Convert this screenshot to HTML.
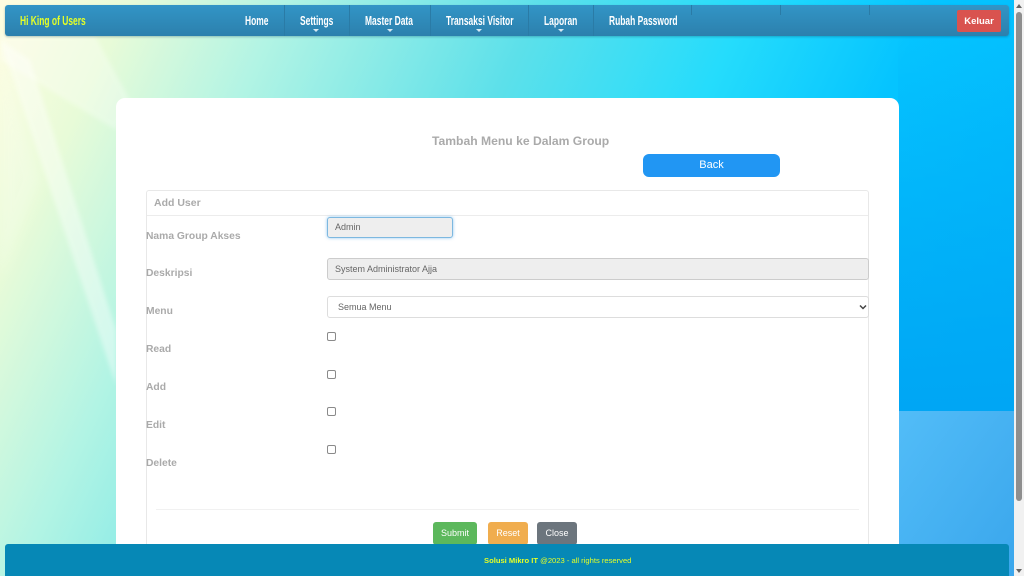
<!DOCTYPE html>
<html><head><meta charset="utf-8">
<style>
html,body{margin:0;padding:0;width:1024px;height:576px;overflow:hidden}
body{position:relative;font-family:"Liberation Sans",sans-serif}
.a{position:absolute}
.bg{left:0;top:0;width:1024px;height:576px;overflow:hidden;background:linear-gradient(115deg,#fffde0 0%,#e8fbd8 10%,#b2f4e4 22%,#5ce0ea 42%,#25dcfc 58%,#05c4ff 72%,#00b4fb 100%)}
.n{position:absolute;top:14px;color:#fff;font-weight:bold;font-size:13px;line-height:14px;white-space:nowrap;transform-origin:0 50%;transform:scaleX(.65)}
.sep{position:absolute;top:5px;width:1px;height:31px;background:#2a7ba6}
.car{position:absolute;top:29px;width:0;height:0;border-left:3.5px solid transparent;border-right:3.5px solid transparent;border-top:3px solid #d5e8f2}
.l{position:absolute;left:146px;font-weight:bold;font-size:10.3px;line-height:13px;color:#aaa}
.cb{position:absolute;left:327px;width:7px;height:7px;border:1px solid #8a8a8a;border-radius:2px;background:#fff}
.btn{position:absolute;top:522px;height:23px;border-radius:3px;color:#fff;font-size:9px;line-height:23px;text-align:center}
</style></head><body>
<div class="a bg">
<svg width="1024" height="576" style="position:absolute;left:0;top:0">
<defs>
<filter id="b" x="-20%" y="-20%" width="140%" height="140%"><feGaussianBlur stdDeviation="2"/></filter>
<filter id="b2" x="-30%" y="-30%" width="160%" height="160%"><feGaussianBlur stdDeviation="6"/></filter>
<linearGradient id="r" x1="0" y1="0" x2="0" y2="1"><stop offset="0" stop-color="#00a6f4" stop-opacity="0"/><stop offset="1" stop-color="#00a6f4"/></linearGradient>
<linearGradient id="q" x1="0" y1="0" x2="1" y2="1"><stop offset="0" stop-color="#52bdf8"/><stop offset="1" stop-color="#3aa6ec"/></linearGradient>
</defs>
<polygon points="0,36 95,36 130,100 116,130 0,60" fill="#fff" opacity=".3" filter="url(#b)"/>
<polygon points="0,40 30,60 116,330 116,385" fill="#fff" opacity=".4" filter="url(#b)"/>
<polygon points="0,40 0,280 40,180" fill="#fff" opacity=".2" filter="url(#b2)"/>
<rect x="898" y="36" width="116" height="375" fill="url(#r)"/>
<rect x="898" y="411" width="116" height="165" fill="url(#q)"/>
</svg>
</div>

<div class="a" style="left:5px;top:5px;width:1004px;height:31px;border-radius:3px;background:linear-gradient(#3295c6,#2c80ad);box-shadow:0 1px 2px rgba(0,60,90,.3)"></div>
<div class="n" style="left:20px;color:#e6ff26">Hi King of Users</div>
<div class="n" style="left:245px">Home</div>
<div class="sep" style="left:284px"></div>
<div class="n" style="left:300px">Settings</div><div class="car" style="left:313px"></div>
<div class="sep" style="left:349px"></div>
<div class="n" style="left:365px">Master Data</div><div class="car" style="left:387px"></div>
<div class="sep" style="left:430px"></div>
<div class="n" style="left:446px">Transaksi Visitor</div><div class="car" style="left:476px"></div>
<div class="sep" style="left:528px"></div>
<div class="n" style="left:544px">Laporan</div><div class="car" style="left:558px"></div>
<div class="sep" style="left:593px"></div>
<div class="n" style="left:609px">Rubah Password</div>
<div class="sep" style="left:691px;height:10px"></div>
<div class="sep" style="left:780px;height:10px"></div>
<div class="sep" style="left:869px;height:10px"></div>
<div class="a" style="left:957px;top:10px;width:44px;height:22px;border-radius:2px;background:#d9534f;color:#fff;font-weight:bold;font-size:9.5px;line-height:23px;text-align:center">Keluar</div>

<div class="a" style="left:116px;top:98px;width:783px;height:470px;background:#fff;border-radius:9px 9px 0 0"></div>
<div class="a" style="left:432px;top:134px;color:#aaa;font-weight:bold;font-size:12.15px;line-height:15px;white-space:nowrap">Tambah Menu ke Dalam Group</div>
<div class="a" style="left:643px;top:154px;width:137px;height:23px;background:#2196f3;border-radius:6px;color:#fff;font-size:11px;line-height:22px;text-align:center">Back</div>

<div class="a" style="left:146px;top:190px;width:723px;height:370px;border:1px solid #e8e8e8;border-radius:3px;box-sizing:border-box"></div>
<div class="a" style="left:147px;top:215px;width:721px;height:1px;background:#ececec"></div>
<div class="a" style="left:154px;top:196px;color:#aaa;font-weight:bold;font-size:10.5px;line-height:14px">Add User</div>

<div class="l" style="top:230px">Nama Group Akses</div>
<div class="l" style="top:267px">Deskripsi</div>
<div class="l" style="top:305px">Menu</div>
<div class="l" style="top:343px">Read</div>
<div class="l" style="top:381px">Add</div>
<div class="l" style="top:419px">Edit</div>
<div class="l" style="top:457px">Delete</div>

<div class="a" style="left:327px;top:217px;width:126px;height:21px;box-sizing:border-box;border:1px solid #7db8e0;border-radius:3px;background:#eee;box-shadow:0 0 3px rgba(102,175,233,.7);color:#666;font-size:9px;line-height:19px;padding-left:7px">Admin</div>
<div class="a" style="left:327px;top:258px;width:542px;height:22px;box-sizing:border-box;border:1px solid #ccc;border-radius:3px;background:#eee;color:#666;font-size:9px;line-height:20px;padding-left:7px">System Administrator Ajja</div>
<div class="a" style="left:327px;top:296px;width:542px;height:22px;box-sizing:border-box;border:1px solid #ddd;border-radius:3px;background:#fff;color:#666;font-size:9px;line-height:20px;padding-left:10px">Semua Menu</div>
<svg class="a" style="left:859px;top:304px" width="8" height="6"><path d="M1 1.5L4 4.5L7 1.5" fill="none" stroke="#444" stroke-width="1.5"/></svg>

<div class="cb" style="top:332px"></div>
<div class="cb" style="top:370px"></div>
<div class="cb" style="top:407px"></div>
<div class="cb" style="top:445px"></div>

<div class="a" style="left:156px;top:509px;width:703px;height:1px;background:#f1f1f1"></div>
<div class="btn" style="left:433px;width:44px;background:#5cb85c">Submit</div>
<div class="btn" style="left:488px;width:40px;background:#f0ad4e">Reset</div>
<div class="btn" style="left:537px;width:40px;background:#6c757d">Close</div>

<div class="a" style="left:5px;top:544px;width:1004px;height:32px;background:#0688b6;border-radius:3px 3px 0 0"></div>
<div class="a" style="left:484px;top:555px;color:#e6ff26;font-size:7.6px;line-height:11px;white-space:nowrap"><b>Solusi Mikro IT</b> @2023 - all rights reserved</div>

<div class="a" style="left:1014px;top:0;width:10px;height:576px;background:#f1f1f1"></div>
<div class="a" style="left:1016px;top:12px;width:6px;height:489px;background:#8e8e8e;border-radius:3px"></div>
<div class="a" style="left:1016px;top:4px;width:0;height:0;border-left:3px solid transparent;border-right:3px solid transparent;border-bottom:4px solid #666"></div>
<div class="a" style="left:1016px;top:569px;width:0;height:0;border-left:3px solid transparent;border-right:3px solid transparent;border-top:4px solid #666"></div>
</body></html>
